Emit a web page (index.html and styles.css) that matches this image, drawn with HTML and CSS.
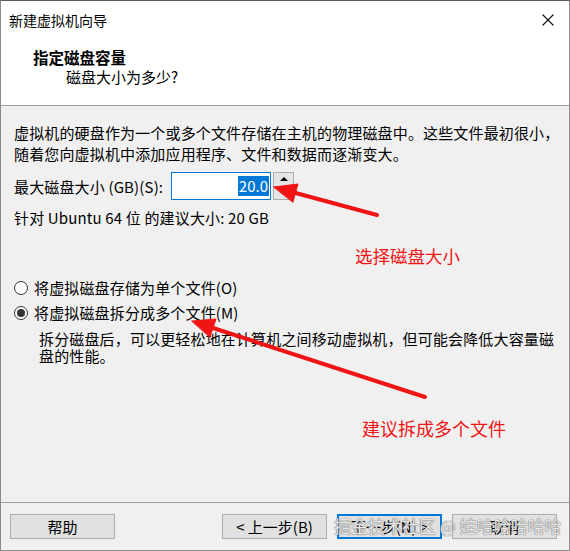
FILE: index.html
```html
<!DOCTYPE html>
<html lang="zh-CN">
<head>
<meta charset="utf-8">
<title>新建虚拟机向导</title>
<link rel="stylesheet" href="styles.css">
</head>
<body>
<div class="window">
  <div class="titlebar">
    <span class="title">新建虚拟机向导</span>
    <svg class="close" width="12" height="12" viewBox="0 0 12 12"><path d="M0.5 0.5 L11.5 11.5 M11.5 0.5 L0.5 11.5" stroke="#111" stroke-width="1.1" fill="none"/></svg>
  </div>
  <div class="header">
    <div class="h-title">指定磁盘容量</div>
    <div class="h-sub">磁盘大小为多少?</div>
  </div>
  <div class="body">
    <p class="intro">虚拟机的硬盘作为一个或多个文件存储在主机的物理磁盘中。这些文件最初很小，<br>随着您向虚拟机中添加应用程序、文件和数据而逐渐变大。</p>
    <div class="size-row">
      <span class="label">最大磁盘大小 (GB)(S):</span>
      <div class="input"><span class="sel">20.0</span></div>
      <div class="spin-btns">
        <div class="spin-btn"><span class="tri-up"></span></div>
        <div class="spin-btn"><span class="tri-down"></span></div>
      </div>
    </div>
    <p class="rec">针对 Ubuntu 64 位 的建议大小: 20 GB</p>
    <div class="options">
      <div class="radio-row"><span class="radio"></span><span>将虚拟磁盘存储为单个文件(O)</span></div>
      <div class="radio-row"><span class="radio checked"></span><span>将虚拟磁盘拆分成多个文件(M)</span></div>
      <p class="desc">拆分磁盘后，可以更轻松地在计算机之间移动虚拟机，但可能会降低大容量磁<br>盘的性能。</p>
    </div>
  </div>
  <div class="footer">
    <button class="btn">帮助</button>
    <div class="nav">
      <button class="btn">&lt; 上一步(B)</button>
      <button class="btn primary">下一步(N) &gt;</button>
      <button class="btn">取消</button>
    </div>
  </div>

  <span class="note note-size">选择磁盘大小</span>
  <span class="note note-split">建议拆成多个文件</span>
  <svg class="arrows" width="570" height="551" viewBox="0 0 570 551">
    <g stroke="#f01414" stroke-width="4" stroke-linecap="round" fill="#f01414">
      <line x1="377" y1="215" x2="292" y2="192"/>
      <polygon points="274,187 298,184 293,202" stroke-width="1" stroke-linejoin="round"/>
      <line x1="425" y1="397" x2="210" y2="327"/>
      <polygon points="192,321 216,319 210,337" stroke-width="1" stroke-linejoin="round"/>
    </g>
  </svg>
  <span class="watermark">掘金技术社区 @ 娃哈哈哈哈哈</span>
</div>
</body>
</html>
```
FILE: styles.css
```css
* { box-sizing: border-box; }
html, body { margin: 0; padding: 0; }
body {
  width: 570px;
  height: 551px;
  font-family: "Noto Sans CJK SC", "Noto Sans", sans-serif;
  font-size: 15px;
  color: #000;
  background: #f0f0f0;
  overflow: hidden;
}
.window {
  position: relative;
  width: 570px;
  height: 551px;
  display: flex;
  flex-direction: column;
  border-left: 1px solid #8c8c8c;
  border-right: 1px solid #8c8c8c;
  border-bottom: 1px solid #8c8c8c;
  border-top: 1px solid #5a5a5a;
  background: #f0f0f0;
}
.titlebar {
  height: 37px;
  background: #fff;
  display: flex;
  align-items: center;
  justify-content: space-between;
  padding: 0 15px 0 8px;
}
.title { font-size: 14px; line-height: 20px; }
.close { display: block; }
.header {
  background: #fff;
  padding: 9px 0 18px 32px;
  border-bottom: 1px solid #a0a0a0;
}
.h-title { font-weight: bold; font-size: 15.5px; line-height: 20px; }
.h-sub { line-height: 20px; padding-left: 33px; }
.body {
  flex: 1;
  padding: 16px 0 0 13px;
  letter-spacing: 0.15px;
}
.intro {
  margin: 0;
  line-height: 21px;
  white-space: nowrap;
}
.size-row {
  display: flex;
  align-items: center;
  margin-top: 8px;
  height: 28px;
}
.label { width: 157px; }
.input {
  width: 100px;
  height: 28px;
  border: 1px solid #0078d7;
  background: #fff;
  display: flex;
  align-items: center;
  justify-content: flex-end;
  padding-right: 1px;
  letter-spacing: 0;
}
.sel {
  background: #0078d7;
  color: #fff;
  line-height: 20px;
  padding: 0 1px;
}
.spin-btns {
  margin-left: 2px;
  width: 21px;
  height: 28px;
  display: flex;
  flex-direction: column;
  border: 1px solid #adadad;
  background: #e5e5e5;
}
.spin-btn {
  flex: 1;
  display: flex;
  align-items: center;
  justify-content: center;
}
.spin-btn + .spin-btn { border-top: 1px solid #adadad; }
.tri-up {
  width: 0; height: 0;
  border-left: 4px solid transparent;
  border-right: 4px solid transparent;
  border-bottom: 4px solid #000;
}
.tri-down {
  width: 0; height: 0;
  border-left: 4px solid transparent;
  border-right: 4px solid transparent;
  border-top: 4px solid #000;
}
.rec {
  margin: 8px 0 0;
  line-height: 20px;
}
.options { margin-top: 47px; }
.radio-row {
  display: flex;
  align-items: center;
  height: 25px;
  gap: 6px;
}
.radio {
  width: 14px;
  height: 14px;
  border-radius: 50%;
  border: 1px solid #333;
  background: #fff;
  display: flex;
  align-items: center;
  justify-content: center;
}
.radio.checked::after {
  content: "";
  width: 8px;
  height: 8px;
  border-radius: 50%;
  background: #333;
}
.desc {
  margin: 5px 0 0 25px;
  line-height: 17px;
  white-space: nowrap;
}
.footer {
  height: 48px;
  border-top: 1px solid #a0a0a0;
  display: flex;
  align-items: center;
  justify-content: space-between;
  padding: 0 12px 0 9px;
}
.nav { display: flex; gap: 10px; }
.btn {
  width: 105px;
  height: 25px;
  font-family: inherit;
  font-size: 15px;
  line-height: 20px;
  color: #000;
  background: #e1e1e1;
  border: 1px solid #adadad;
  padding: 0;
}
.btn.primary { border: 2px solid #0078d7; }
.note {
  position: absolute;
  color: #f01414;
  font-size: 17.5px;
  line-height: 22px;
  white-space: nowrap;
}
.note-size { left: 354px; top: 244px; }
.note-split { left: 361px; top: 416px; font-size: 18px; }
.arrows { position: absolute; left: -1px; top: -1px; pointer-events: none; }
.watermark {
  position: absolute;
  left: 333px;
  top: 514px;
  font-size: 17px;
  line-height: 22px;
  color: rgba(255, 255, 255, 0.85);
  text-shadow: 0 0 1px #666, 0 0 1px #666;
  white-space: nowrap;
}
```
